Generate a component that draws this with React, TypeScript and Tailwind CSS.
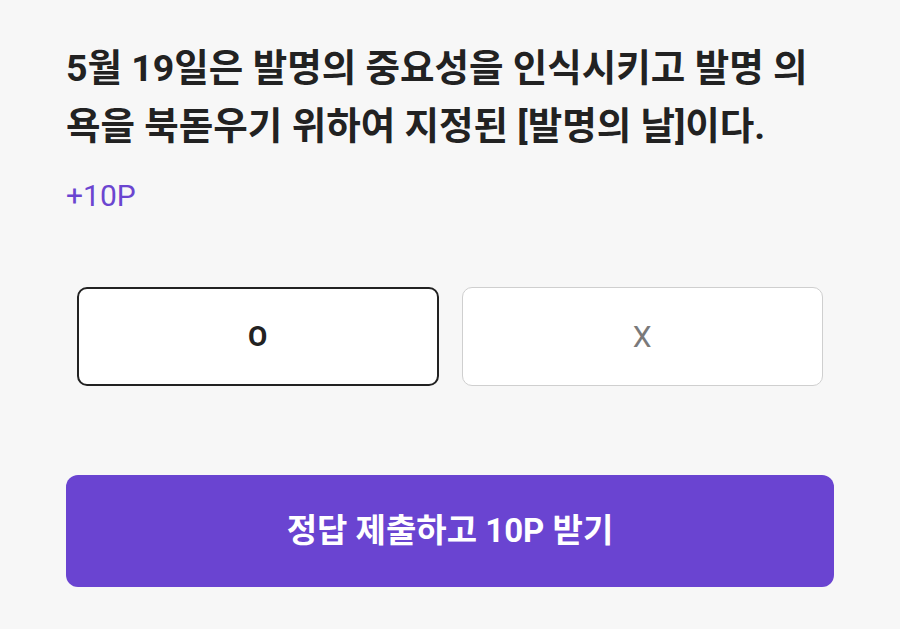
export default function App() {
  return (
    <div
      className="min-h-screen w-full bg-[#f7f7f7] px-[66px] pt-[39px]"
      style={{ fontFamily: 'Roboto, "Noto Sans CJK KR", sans-serif' }}
    >
      <h1 className="text-[37.5px] font-bold leading-[58px] text-[#222222]">
        5월 19일은 발명의 중요성을 인식시키고 발명 의욕을 북돋우기 위하여 지정된 [발명의 날]이다.
      </h1>
      <p className="mt-[21px] text-[30px] leading-[40px] text-[#6b45d0]">+10P</p>

      <div className="mt-[71px] grid grid-cols-2 gap-[23px] px-[11px]">
        <button className="flex h-[99px] items-center justify-center rounded-[10px] border-2 border-[#222222] bg-white text-[28px] font-bold text-[#222222]">
          O
        </button>
        <button className="flex h-[99px] items-center justify-center rounded-[10px] border-[1.5px] border-[#cfcfcf] bg-white text-[30px] text-[#7a7a7a]">
          X
        </button>
      </div>

      <button className="mt-[89px] flex h-[112px] w-full items-center justify-center rounded-[12px] bg-[#6a44d1] text-[33px] font-bold text-white">
        정답 제출하고 10P 받기
      </button>
    </div>
  );
}
